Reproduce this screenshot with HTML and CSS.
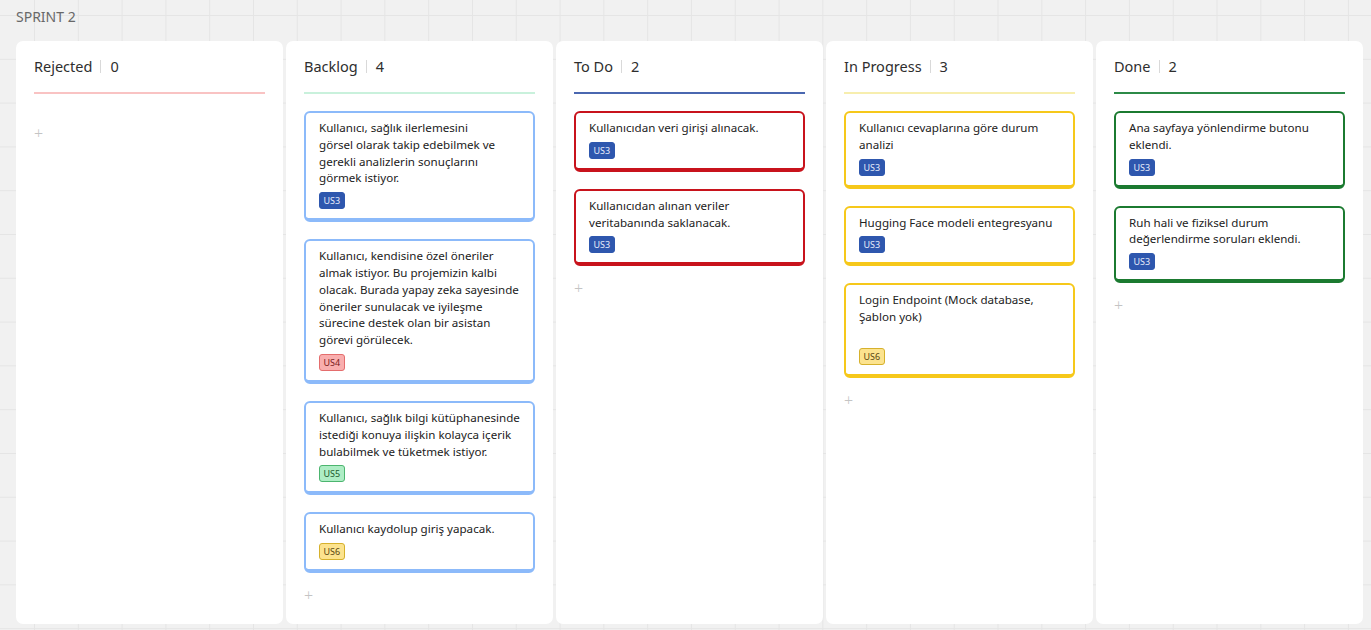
FILE: index.html
```html
<!DOCTYPE html>
<html lang="tr">
<head>
<meta charset="utf-8">
<title>Sprint 2</title>
<link rel="stylesheet" href="styles.css">
</head>
<body>
<div class="board">
  <div class="sprint-label">SPRINT 2</div>
  <div class="columns">
    <section class="column col-rejected">
      <header class="col-head"><span class="col-title">Rejected</span><span class="sep"></span><span class="col-count">0</span></header>
      <div class="col-line"></div>
      <div class="cards"></div>
      <div class="add">+</div>
    </section>

    <section class="column col-backlog">
      <header class="col-head"><span class="col-title">Backlog</span><span class="sep"></span><span class="col-count">4</span></header>
      <div class="col-line"></div>
      <div class="cards">
        <div class="card"><p class="card-text">Kullanıcı, sağlık ilerlemesini<br>görsel olarak takip edebilmek ve gerekli analizlerin sonuçlarını görmek istiyor.</p><span class="tag tag-blue">US3</span></div>
        <div class="card"><p class="card-text">Kullanıcı, kendisine özel öneriler almak istiyor. Bu projemizin kalbi olacak. Burada yapay zeka sayesinde öneriler sunulacak ve iyileşme sürecine destek olan bir asistan görevi görülecek.</p><span class="tag tag-red">US4</span></div>
        <div class="card"><p class="card-text">Kullanıcı, sağlık bilgi kütüphanesinde istediği konuya ilişkin kolayca içerik bulabilmek ve tüketmek istiyor.</p><span class="tag tag-green">US5</span></div>
        <div class="card"><p class="card-text">Kullanıcı kaydolup giriş yapacak.</p><span class="tag tag-yellow">US6</span></div>
      </div>
      <div class="add">+</div>
    </section>

    <section class="column col-todo">
      <header class="col-head"><span class="col-title">To Do</span><span class="sep"></span><span class="col-count">2</span></header>
      <div class="col-line"></div>
      <div class="cards">
        <div class="card"><p class="card-text">Kullanıcıdan veri girişi alınacak.</p><span class="tag tag-blue">US3</span></div>
        <div class="card"><p class="card-text">Kullanıcıdan alınan veriler veritabanında saklanacak.</p><span class="tag tag-blue">US3</span></div>
      </div>
      <div class="add">+</div>
    </section>

    <section class="column col-progress">
      <header class="col-head"><span class="col-title">In Progress</span><span class="sep"></span><span class="col-count">3</span></header>
      <div class="col-line"></div>
      <div class="cards">
        <div class="card"><p class="card-text">Kullanıcı cevaplarına göre durum analizi</p><span class="tag tag-blue">US3</span></div>
        <div class="card"><p class="card-text">Hugging Face modeli entegresyanu</p><span class="tag tag-blue">US3</span></div>
        <div class="card"><p class="card-text">Login Endpoint (Mock database, Şablon yok)<br>&nbsp;</p><span class="tag tag-yellow">US6</span></div>
      </div>
      <div class="add">+</div>
    </section>

    <section class="column col-done">
      <header class="col-head"><span class="col-title">Done</span><span class="sep"></span><span class="col-count">2</span></header>
      <div class="col-line"></div>
      <div class="cards">
        <div class="card"><p class="card-text">Ana sayfaya yönlendirme butonu eklendi.</p><span class="tag tag-blue">US3</span></div>
        <div class="card"><p class="card-text">Ruh hali ve fiziksel durum değerlendirme soruları eklendi.</p><span class="tag tag-blue">US3</span></div>
      </div>
      <div class="add">+</div>
    </section>
  </div>
</div>
</body>
</html>
```

FILE: styles.css
```css
* { box-sizing: border-box; }
html, body { margin: 0; padding: 0; }
body {
  width: 1371px;
  height: 630px;
  overflow: hidden;
  font-family: "Noto Sans", "Open Sans", sans-serif;
  color: #222;
  background-color: #f1f1f1;
  background-image:
    linear-gradient(to right, #e5e5e5 1px, transparent 1px),
    linear-gradient(to bottom, #e5e5e5 1px, transparent 1px);
  background-size: 43.8px 43.8px;
  background-position: 34px 15px;
}
.board {
  padding: 7px 8px 0 16px;
}
.sprint-label {
  font-size: 14px;
  line-height: 20px;
  color: #686868;
  height: 34px;
}
.columns {
  display: flex;
  gap: 3px;
}
.column {
  width: 267px;
  height: 583px;
  background: #fff;
  border-radius: 7px;
  padding: 15px 18px 0 18px;
  display: flex;
  flex-direction: column;
}
.col-head {
  display: flex;
  align-items: center;
  height: 20px;
  font-size: 14.5px;
  color: #2e2e2e;
}
.sep {
  display: inline-block;
  width: 1px;
  height: 13px;
  background: #d9d9d9;
  margin: 0 9px 0 8px;
}
.col-line {
  height: 2px;
  margin-top: 16px;
  background: #ccc;
}
.col-rejected .col-line { background: #f9c3c3; }
.col-backlog .col-line { background: #c9f1dc; }
.col-todo .col-line { background: #4a67b0; }
.col-progress .col-line { background: #f7eeae; }
.col-done .col-line { background: #2c8a47; }

.cards {
  display: flex;
  flex-direction: column;
  gap: 17px;
  margin-top: 17px;
}
.card {
  border: 2px solid #8cbafa;
  border-bottom-width: 4px;
  border-radius: 6px;
  padding: 7px 13px 9px 13px;
  background: #fff;
}
.col-todo .card { border-color: #c8131c; }
.col-progress .card { border-color: #f6c81a; }
.col-done .card { border-color: #1b7a30; }

.card-text {
  margin: 0;
  font-size: 11.6px;
  line-height: 16.8px;
  color: #222;
}
.tag {
  display: inline-block;
  margin-top: 5px;
  height: 17px;
  line-height: 15px;
  padding: 0 3.5px;
  border: 1px solid;
  border-radius: 3px;
  font-size: 9px;
  vertical-align: top;
}
.tag-blue { background: #2e57ae; border-color: #2e57ae; color: #e6ecfa; }
.tag-red { background: #f9aeae; border-color: #e46d6d; color: #7a2020; }
.tag-green { background: #aeedc5; border-color: #4cb56f; color: #1c5a2e; }
.tag-yellow { background: #fce38e; border-color: #d6b12c; color: #5a4610; }

.add {
  margin-top: 10px;
  font-size: 16px;
  line-height: 24px;
  color: #c4c4c4;
  font-weight: 300;
}
```
